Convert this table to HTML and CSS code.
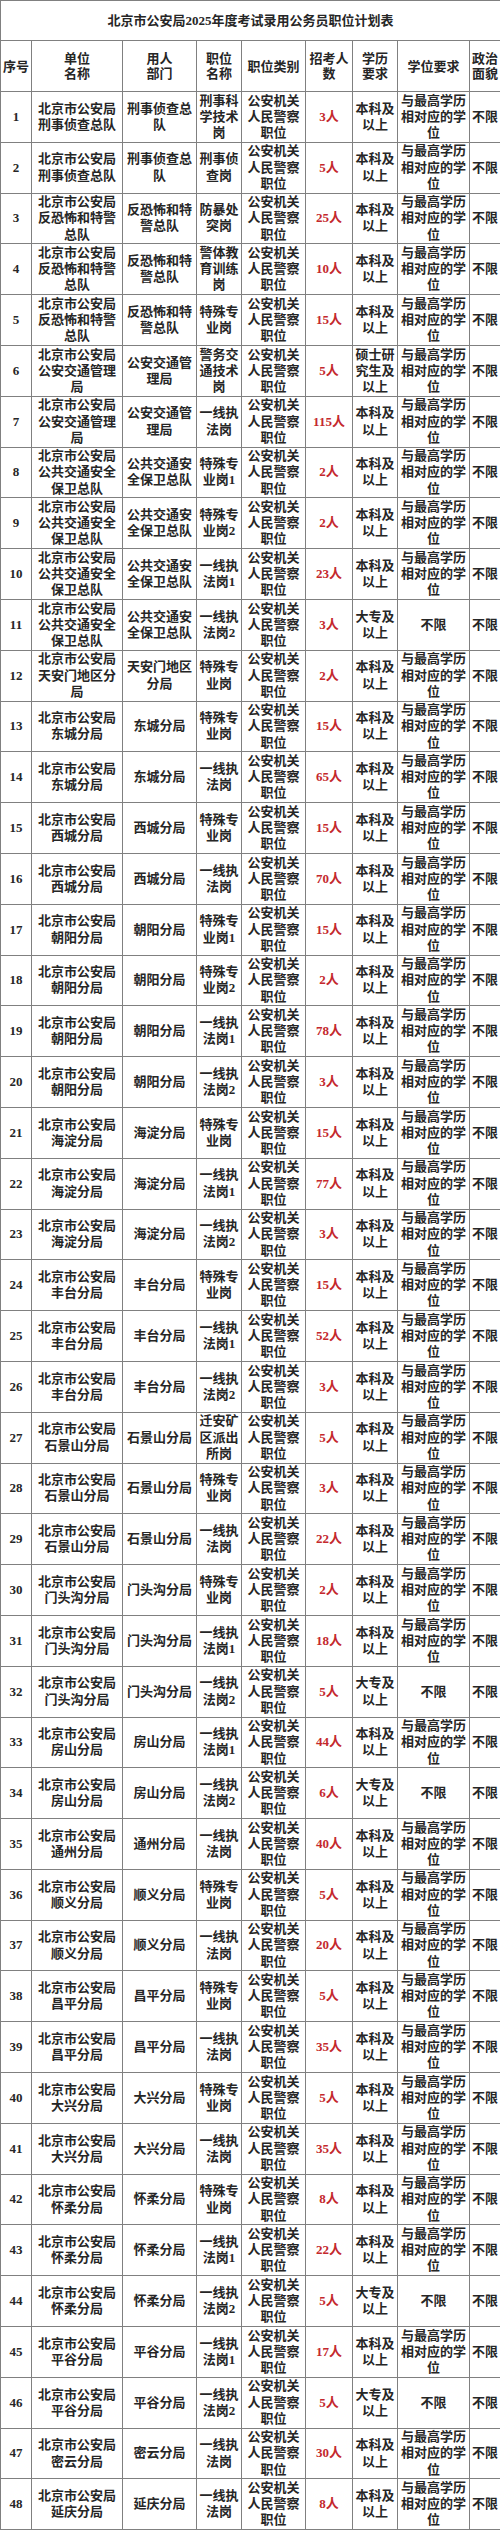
FILE: index.html
```html
<!DOCTYPE html>
<html lang="zh-CN">
<head>
<meta charset="utf-8">
<title>北京市公安局2025年度考试录用公务员职位计划表</title>
<link rel="stylesheet" href="styles.css">
</head>
<body>
<table class="plan">
<colgroup>
<col class="c-no"><col class="c-unit"><col class="c-dept"><col class="c-pos"><col class="c-type"><col class="c-num"><col class="c-edu"><col class="c-deg"><col class="c-pol">
</colgroup>
<thead>
<tr class="title-row"><th colspan="9" class="title">北京市公安局2025年度考试录用公务员职位计划表</th></tr>
<tr class="head-row">
<th>序号</th><th>单位<br>名称</th><th>用人<br>部门</th><th>职位<br>名称</th><th>职位类别</th><th>招考人<br>数</th><th>学历<br>要求</th><th>学位要求</th><th>政治<br>面貌</th>
</tr>
</thead>
<tbody>
<tr><td>1</td><td>北京市公安局<br>刑事侦查总队</td><td>刑事侦查总<br>队</td><td>刑事科<br>学技术<br>岗</td><td>公安机关<br>人民警察<br>职位</td><td class="num">3人</td><td>本科及<br>以上</td><td>与最高学历<br>相对应的学<br>位</td><td>不限</td></tr>
<tr><td>2</td><td>北京市公安局<br>刑事侦查总队</td><td>刑事侦查总<br>队</td><td>刑事侦<br>查岗</td><td>公安机关<br>人民警察<br>职位</td><td class="num">5人</td><td>本科及<br>以上</td><td>与最高学历<br>相对应的学<br>位</td><td>不限</td></tr>
<tr><td>3</td><td>北京市公安局<br>反恐怖和特警<br>总队</td><td>反恐怖和特<br>警总队</td><td>防暴处<br>突岗</td><td>公安机关<br>人民警察<br>职位</td><td class="num">25人</td><td>本科及<br>以上</td><td>与最高学历<br>相对应的学<br>位</td><td>不限</td></tr>
<tr><td>4</td><td>北京市公安局<br>反恐怖和特警<br>总队</td><td>反恐怖和特<br>警总队</td><td>警体教<br>育训练<br>岗</td><td>公安机关<br>人民警察<br>职位</td><td class="num">10人</td><td>本科及<br>以上</td><td>与最高学历<br>相对应的学<br>位</td><td>不限</td></tr>
<tr><td>5</td><td>北京市公安局<br>反恐怖和特警<br>总队</td><td>反恐怖和特<br>警总队</td><td>特殊专<br>业岗</td><td>公安机关<br>人民警察<br>职位</td><td class="num">15人</td><td>本科及<br>以上</td><td>与最高学历<br>相对应的学<br>位</td><td>不限</td></tr>
<tr><td>6</td><td>北京市公安局<br>公安交通管理<br>局</td><td>公安交通管<br>理局</td><td>警务交<br>通技术<br>岗</td><td>公安机关<br>人民警察<br>职位</td><td class="num">5人</td><td>硕士研<br>究生及<br>以上</td><td>与最高学历<br>相对应的学<br>位</td><td>不限</td></tr>
<tr><td>7</td><td>北京市公安局<br>公安交通管理<br>局</td><td>公安交通管<br>理局</td><td>一线执<br>法岗</td><td>公安机关<br>人民警察<br>职位</td><td class="num">115人</td><td>本科及<br>以上</td><td>与最高学历<br>相对应的学<br>位</td><td>不限</td></tr>
<tr><td>8</td><td>北京市公安局<br>公共交通安全<br>保卫总队</td><td>公共交通安<br>全保卫总队</td><td>特殊专<br>业岗1</td><td>公安机关<br>人民警察<br>职位</td><td class="num">2人</td><td>本科及<br>以上</td><td>与最高学历<br>相对应的学<br>位</td><td>不限</td></tr>
<tr><td>9</td><td>北京市公安局<br>公共交通安全<br>保卫总队</td><td>公共交通安<br>全保卫总队</td><td>特殊专<br>业岗2</td><td>公安机关<br>人民警察<br>职位</td><td class="num">2人</td><td>本科及<br>以上</td><td>与最高学历<br>相对应的学<br>位</td><td>不限</td></tr>
<tr><td>10</td><td>北京市公安局<br>公共交通安全<br>保卫总队</td><td>公共交通安<br>全保卫总队</td><td>一线执<br>法岗1</td><td>公安机关<br>人民警察<br>职位</td><td class="num">23人</td><td>本科及<br>以上</td><td>与最高学历<br>相对应的学<br>位</td><td>不限</td></tr>
<tr><td>11</td><td>北京市公安局<br>公共交通安全<br>保卫总队</td><td>公共交通安<br>全保卫总队</td><td>一线执<br>法岗2</td><td>公安机关<br>人民警察<br>职位</td><td class="num">3人</td><td>大专及<br>以上</td><td>不限</td><td>不限</td></tr>
<tr><td>12</td><td>北京市公安局<br>天安门地区分<br>局</td><td>天安门地区<br>分局</td><td>特殊专<br>业岗</td><td>公安机关<br>人民警察<br>职位</td><td class="num">2人</td><td>本科及<br>以上</td><td>与最高学历<br>相对应的学<br>位</td><td>不限</td></tr>
<tr><td>13</td><td>北京市公安局<br>东城分局</td><td>东城分局</td><td>特殊专<br>业岗</td><td>公安机关<br>人民警察<br>职位</td><td class="num">15人</td><td>本科及<br>以上</td><td>与最高学历<br>相对应的学<br>位</td><td>不限</td></tr>
<tr><td>14</td><td>北京市公安局<br>东城分局</td><td>东城分局</td><td>一线执<br>法岗</td><td>公安机关<br>人民警察<br>职位</td><td class="num">65人</td><td>本科及<br>以上</td><td>与最高学历<br>相对应的学<br>位</td><td>不限</td></tr>
<tr><td>15</td><td>北京市公安局<br>西城分局</td><td>西城分局</td><td>特殊专<br>业岗</td><td>公安机关<br>人民警察<br>职位</td><td class="num">15人</td><td>本科及<br>以上</td><td>与最高学历<br>相对应的学<br>位</td><td>不限</td></tr>
<tr><td>16</td><td>北京市公安局<br>西城分局</td><td>西城分局</td><td>一线执<br>法岗</td><td>公安机关<br>人民警察<br>职位</td><td class="num">70人</td><td>本科及<br>以上</td><td>与最高学历<br>相对应的学<br>位</td><td>不限</td></tr>
<tr><td>17</td><td>北京市公安局<br>朝阳分局</td><td>朝阳分局</td><td>特殊专<br>业岗1</td><td>公安机关<br>人民警察<br>职位</td><td class="num">15人</td><td>本科及<br>以上</td><td>与最高学历<br>相对应的学<br>位</td><td>不限</td></tr>
<tr><td>18</td><td>北京市公安局<br>朝阳分局</td><td>朝阳分局</td><td>特殊专<br>业岗2</td><td>公安机关<br>人民警察<br>职位</td><td class="num">2人</td><td>本科及<br>以上</td><td>与最高学历<br>相对应的学<br>位</td><td>不限</td></tr>
<tr><td>19</td><td>北京市公安局<br>朝阳分局</td><td>朝阳分局</td><td>一线执<br>法岗1</td><td>公安机关<br>人民警察<br>职位</td><td class="num">78人</td><td>本科及<br>以上</td><td>与最高学历<br>相对应的学<br>位</td><td>不限</td></tr>
<tr><td>20</td><td>北京市公安局<br>朝阳分局</td><td>朝阳分局</td><td>一线执<br>法岗2</td><td>公安机关<br>人民警察<br>职位</td><td class="num">3人</td><td>本科及<br>以上</td><td>与最高学历<br>相对应的学<br>位</td><td>不限</td></tr>
<tr><td>21</td><td>北京市公安局<br>海淀分局</td><td>海淀分局</td><td>特殊专<br>业岗</td><td>公安机关<br>人民警察<br>职位</td><td class="num">15人</td><td>本科及<br>以上</td><td>与最高学历<br>相对应的学<br>位</td><td>不限</td></tr>
<tr><td>22</td><td>北京市公安局<br>海淀分局</td><td>海淀分局</td><td>一线执<br>法岗1</td><td>公安机关<br>人民警察<br>职位</td><td class="num">77人</td><td>本科及<br>以上</td><td>与最高学历<br>相对应的学<br>位</td><td>不限</td></tr>
<tr><td>23</td><td>北京市公安局<br>海淀分局</td><td>海淀分局</td><td>一线执<br>法岗2</td><td>公安机关<br>人民警察<br>职位</td><td class="num">3人</td><td>本科及<br>以上</td><td>与最高学历<br>相对应的学<br>位</td><td>不限</td></tr>
<tr><td>24</td><td>北京市公安局<br>丰台分局</td><td>丰台分局</td><td>特殊专<br>业岗</td><td>公安机关<br>人民警察<br>职位</td><td class="num">15人</td><td>本科及<br>以上</td><td>与最高学历<br>相对应的学<br>位</td><td>不限</td></tr>
<tr><td>25</td><td>北京市公安局<br>丰台分局</td><td>丰台分局</td><td>一线执<br>法岗1</td><td>公安机关<br>人民警察<br>职位</td><td class="num">52人</td><td>本科及<br>以上</td><td>与最高学历<br>相对应的学<br>位</td><td>不限</td></tr>
<tr><td>26</td><td>北京市公安局<br>丰台分局</td><td>丰台分局</td><td>一线执<br>法岗2</td><td>公安机关<br>人民警察<br>职位</td><td class="num">3人</td><td>本科及<br>以上</td><td>与最高学历<br>相对应的学<br>位</td><td>不限</td></tr>
<tr><td>27</td><td>北京市公安局<br>石景山分局</td><td>石景山分局</td><td>迁安矿<br>区派出<br>所岗</td><td>公安机关<br>人民警察<br>职位</td><td class="num">5人</td><td>本科及<br>以上</td><td>与最高学历<br>相对应的学<br>位</td><td>不限</td></tr>
<tr><td>28</td><td>北京市公安局<br>石景山分局</td><td>石景山分局</td><td>特殊专<br>业岗</td><td>公安机关<br>人民警察<br>职位</td><td class="num">3人</td><td>本科及<br>以上</td><td>与最高学历<br>相对应的学<br>位</td><td>不限</td></tr>
<tr><td>29</td><td>北京市公安局<br>石景山分局</td><td>石景山分局</td><td>一线执<br>法岗</td><td>公安机关<br>人民警察<br>职位</td><td class="num">22人</td><td>本科及<br>以上</td><td>与最高学历<br>相对应的学<br>位</td><td>不限</td></tr>
<tr><td>30</td><td>北京市公安局<br>门头沟分局</td><td>门头沟分局</td><td>特殊专<br>业岗</td><td>公安机关<br>人民警察<br>职位</td><td class="num">2人</td><td>本科及<br>以上</td><td>与最高学历<br>相对应的学<br>位</td><td>不限</td></tr>
<tr><td>31</td><td>北京市公安局<br>门头沟分局</td><td>门头沟分局</td><td>一线执<br>法岗1</td><td>公安机关<br>人民警察<br>职位</td><td class="num">18人</td><td>本科及<br>以上</td><td>与最高学历<br>相对应的学<br>位</td><td>不限</td></tr>
<tr><td>32</td><td>北京市公安局<br>门头沟分局</td><td>门头沟分局</td><td>一线执<br>法岗2</td><td>公安机关<br>人民警察<br>职位</td><td class="num">5人</td><td>大专及<br>以上</td><td>不限</td><td>不限</td></tr>
<tr><td>33</td><td>北京市公安局<br>房山分局</td><td>房山分局</td><td>一线执<br>法岗1</td><td>公安机关<br>人民警察<br>职位</td><td class="num">44人</td><td>本科及<br>以上</td><td>与最高学历<br>相对应的学<br>位</td><td>不限</td></tr>
<tr><td>34</td><td>北京市公安局<br>房山分局</td><td>房山分局</td><td>一线执<br>法岗2</td><td>公安机关<br>人民警察<br>职位</td><td class="num">6人</td><td>大专及<br>以上</td><td>不限</td><td>不限</td></tr>
<tr><td>35</td><td>北京市公安局<br>通州分局</td><td>通州分局</td><td>一线执<br>法岗</td><td>公安机关<br>人民警察<br>职位</td><td class="num">40人</td><td>本科及<br>以上</td><td>与最高学历<br>相对应的学<br>位</td><td>不限</td></tr>
<tr><td>36</td><td>北京市公安局<br>顺义分局</td><td>顺义分局</td><td>特殊专<br>业岗</td><td>公安机关<br>人民警察<br>职位</td><td class="num">5人</td><td>本科及<br>以上</td><td>与最高学历<br>相对应的学<br>位</td><td>不限</td></tr>
<tr><td>37</td><td>北京市公安局<br>顺义分局</td><td>顺义分局</td><td>一线执<br>法岗</td><td>公安机关<br>人民警察<br>职位</td><td class="num">20人</td><td>本科及<br>以上</td><td>与最高学历<br>相对应的学<br>位</td><td>不限</td></tr>
<tr><td>38</td><td>北京市公安局<br>昌平分局</td><td>昌平分局</td><td>特殊专<br>业岗</td><td>公安机关<br>人民警察<br>职位</td><td class="num">5人</td><td>本科及<br>以上</td><td>与最高学历<br>相对应的学<br>位</td><td>不限</td></tr>
<tr><td>39</td><td>北京市公安局<br>昌平分局</td><td>昌平分局</td><td>一线执<br>法岗</td><td>公安机关<br>人民警察<br>职位</td><td class="num">35人</td><td>本科及<br>以上</td><td>与最高学历<br>相对应的学<br>位</td><td>不限</td></tr>
<tr><td>40</td><td>北京市公安局<br>大兴分局</td><td>大兴分局</td><td>特殊专<br>业岗</td><td>公安机关<br>人民警察<br>职位</td><td class="num">5人</td><td>本科及<br>以上</td><td>与最高学历<br>相对应的学<br>位</td><td>不限</td></tr>
<tr><td>41</td><td>北京市公安局<br>大兴分局</td><td>大兴分局</td><td>一线执<br>法岗</td><td>公安机关<br>人民警察<br>职位</td><td class="num">35人</td><td>本科及<br>以上</td><td>与最高学历<br>相对应的学<br>位</td><td>不限</td></tr>
<tr><td>42</td><td>北京市公安局<br>怀柔分局</td><td>怀柔分局</td><td>特殊专<br>业岗</td><td>公安机关<br>人民警察<br>职位</td><td class="num">8人</td><td>本科及<br>以上</td><td>与最高学历<br>相对应的学<br>位</td><td>不限</td></tr>
<tr><td>43</td><td>北京市公安局<br>怀柔分局</td><td>怀柔分局</td><td>一线执<br>法岗1</td><td>公安机关<br>人民警察<br>职位</td><td class="num">22人</td><td>本科及<br>以上</td><td>与最高学历<br>相对应的学<br>位</td><td>不限</td></tr>
<tr><td>44</td><td>北京市公安局<br>怀柔分局</td><td>怀柔分局</td><td>一线执<br>法岗2</td><td>公安机关<br>人民警察<br>职位</td><td class="num">5人</td><td>大专及<br>以上</td><td>不限</td><td>不限</td></tr>
<tr><td>45</td><td>北京市公安局<br>平谷分局</td><td>平谷分局</td><td>一线执<br>法岗1</td><td>公安机关<br>人民警察<br>职位</td><td class="num">17人</td><td>本科及<br>以上</td><td>与最高学历<br>相对应的学<br>位</td><td>不限</td></tr>
<tr><td>46</td><td>北京市公安局<br>平谷分局</td><td>平谷分局</td><td>一线执<br>法岗2</td><td>公安机关<br>人民警察<br>职位</td><td class="num">5人</td><td>大专及<br>以上</td><td>不限</td><td>不限</td></tr>
<tr><td>47</td><td>北京市公安局<br>密云分局</td><td>密云分局</td><td>一线执<br>法岗</td><td>公安机关<br>人民警察<br>职位</td><td class="num">30人</td><td>本科及<br>以上</td><td>与最高学历<br>相对应的学<br>位</td><td>不限</td></tr>
<tr><td>48</td><td>北京市公安局<br>延庆分局</td><td>延庆分局</td><td>一线执<br>法岗</td><td>公安机关<br>人民警察<br>职位</td><td class="num">8人</td><td>本科及<br>以上</td><td>与最高学历<br>相对应的学<br>位</td><td>不限</td></tr>
</tbody>
</table>
</body>
</html>
```
FILE: styles.css
```css
html, body {
  margin: 0;
  padding: 0;
  background: #ffffff;
}

.plan {
  border-collapse: collapse;
  table-layout: fixed;
  width: 500px;
  font-family: "Liberation Serif", "Noto Sans CJK SC", serif;
  font-size: 13px;
  line-height: 16.2px;
  font-weight: 700;
  color: #262626;
}

.c-no { width: 31px; }
.c-unit { width: 91px; }
.c-dept { width: 74px; }
.c-pos { width: 45px; }
.c-type { width: 64px; }
.c-num { width: 47px; }
.c-edu { width: 45px; }
.c-deg { width: 72px; }
.c-pol { width: 31px; }

.plan th,
.plan td {
  border: 1px solid #808080;
  padding: 0;
  text-align: center;
  vertical-align: middle;
  white-space: nowrap;
  overflow: hidden;
}

.plan th {
  font-weight: 700;
}

.title-row {
  height: 40px;
}

.title {
  line-height: 16px;
}

.head-row {
  height: 51px;
}

.head-row th {
  line-height: 15px;
}

.plan tbody tr {
  height: 50.8px;
}

.plan td.num {
  color: #c4282d;
}
```
